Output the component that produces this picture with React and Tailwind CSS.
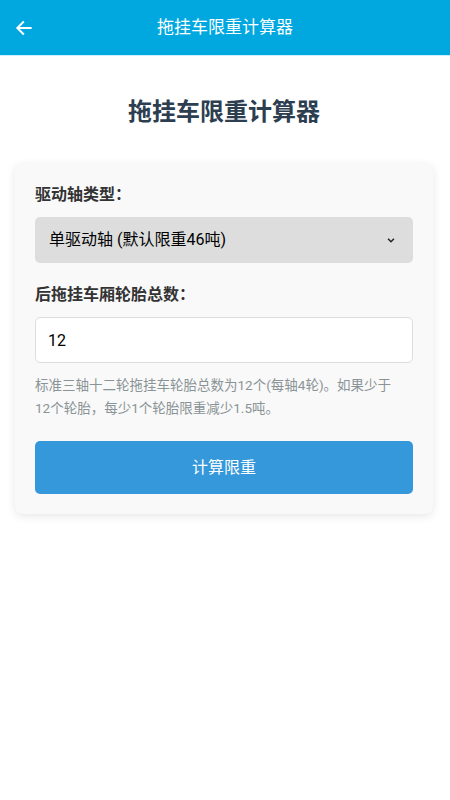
import React, { useState } from 'react';

export default function App() {
  const [axle, setAxle] = useState('single');
  const [tires, setTires] = useState('12');

  return (
    <div className="min-h-[800px] bg-white font-['Roboto','Noto_Sans_CJK_SC',sans-serif]">
      {/* 顶部栏 */}
      <div className="h-14 bg-[#00a8df] flex items-center relative border-b border-[#cdeefa]">
        <button className="absolute left-[12px] top-1/2 -translate-y-1/2 text-white p-0.5">
          <svg width="20" height="20" viewBox="0 0 24 24" fill="none" stroke="currentColor" strokeWidth="2.4" strokeLinecap="square">
            <path d="M20 12H5" />
            <path d="M11 5l-7 7 7 7" />
          </svg>
        </button>
        <h1 className="flex-1 text-center text-white text-[17px]">拖挂车限重计算器</h1>
      </div>

      <div className="pl-[15px] pr-[17px]">
        <h2 className="text-center text-[24px] font-bold text-[#2c3e50] mt-[38px] mb-[34px]">拖挂车限重计算器</h2>

        <div className="bg-[#f9f9f9] rounded-lg shadow-[0_2px_10px_rgba(0,0,0,0.1)] px-5 pt-[19px] pb-5">
          <label className="block text-[16px] font-bold text-[#333] mb-[10px]">驱动轴类型：</label>
          <div className="relative">
            <select
              value={axle}
              onChange={(e) => setAxle(e.target.value)}
              className="appearance-none w-full h-[46px] bg-[#dddddd] rounded-[5px] pl-[14px] pr-10 text-[16px] text-black outline-none"
            >
              <option value="single">单驱动轴 (默认限重46吨)</option>
              <option value="double">双驱动轴 (默认限重49吨)</option>
            </select>
            <svg className="absolute right-[17px] top-1/2 -translate-y-1/2 pointer-events-none" width="10" height="10" viewBox="0 0 12 12" fill="none" stroke="#222" strokeWidth="1.8">
              <path d="M2.5 4.5L6 8l3.5-3.5" />
            </svg>
          </div>

          <label className="block text-[16px] font-bold text-[#333] mt-[20px] mb-[10px]">后拖挂车厢轮胎总数：</label>
          <input
            type="number"
            value={tires}
            onChange={(e) => setTires(e.target.value)}
            className="w-full h-[46px] bg-white border border-[#dddddd] rounded-[5px] px-[12px] text-[16px] text-black outline-none"
          />
          <p className="text-[13.5px] leading-[23px] text-[#8a9496] mt-[11px]">
            标准三轴十二轮拖挂车轮胎总数为12个(每轴4轮)。如果少于<span className="whitespace-nowrap">12个</span>轮胎，每少1个轮胎限重减少1.5吨。
          </p>

          <button className="w-full h-[53px] mt-[21px] bg-[#3498db] rounded-[5px] text-white text-[16px]">计算限重</button>
        </div>
      </div>
    </div>
  );
}
